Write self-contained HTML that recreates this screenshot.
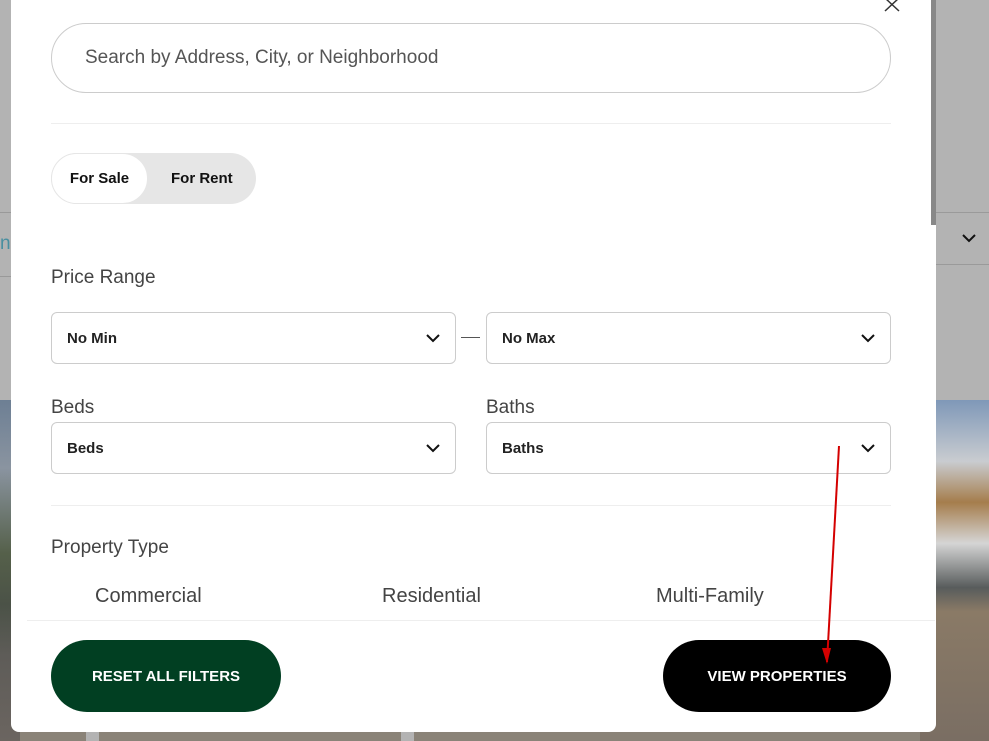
<!DOCTYPE html>
<html><head><meta charset="utf-8"><style>
*{box-sizing:border-box;margin:0;padding:0}
body{width:989px;height:741px;overflow:hidden;position:relative;background:#b3b3b3;font-family:"Liberation Sans",sans-serif}
.img{position:absolute;top:400px;height:341px;background:linear-gradient(180deg,#6d7f94 0%,#8a94a0 20%,#55604a 45%,#4b5247 60%,#5e5c58 75%,#6b6560 100%)}
.sel{position:absolute;left:920px;top:212px;width:80px;height:53px;border:1px solid #9a9a9a;border-radius:8px}
.modal{position:absolute;left:11px;top:-10px;width:925px;height:742px;background:#fff;border-radius:8px}
.abs{position:absolute}
.search{left:51px;top:23px;width:840px;height:70px;border:1px solid #ccc;border-radius:35px;font-size:19px;color:#555;padding:0 0 0 33px;line-height:68px}
.hr{height:1px;background:#eee;left:51px;width:840px}
.tog{left:51px;top:153px;width:205px;height:51px;background:#e6e6e6;border-radius:26px}
.tog .a{position:absolute;left:0;top:0;width:97px;height:51px;background:#fff;border:1px solid #e6e6e6;border-radius:26px;text-align:center;line-height:49px;font-weight:bold;font-size:15px;color:#111}
.tog .b{position:absolute;left:120px;top:0;line-height:51px;font-weight:bold;font-size:15px;color:#111}
.lbl{font-size:19px;color:#444}
.dd{height:52px;border:1px solid #ccc;border-radius:6px;font-weight:bold;font-size:15px;color:#222;padding-left:15px;line-height:51px}
.dd svg{position:absolute;right:14px;top:20px}
.pt{font-size:20px;color:#444;top:585px}
.btn{top:640px;height:72px;border-radius:36px;color:#fff;font-weight:bold;font-size:15px;text-align:center;line-height:73px}
</style></head><body>
<div class="img" style="left:0;width:20px"></div>
<div class="img" style="left:920px;width:69px;background:linear-gradient(180deg,#7f98b8 0%,#c9ccd0 18%,#a57d4c 30%,#d5d5d5 42%,#585c5c 55%,#8a7a66 62%,#7a6e63 100%)"></div>
<div class="abs" style="left:20px;top:732px;width:900px;height:9px;background:#8a8378"></div>
<div class="abs" style="left:86px;top:732px;width:13px;height:9px;background:#b3b3b3"></div>
<div class="abs" style="left:401px;top:732px;width:13px;height:9px;background:#b3b3b3"></div>
<div class="sel"><svg width="16" height="10" style="position:absolute;left:40px;top:20px" viewBox="0 0 16 10"><path d="M2 2l6 6 6-6" fill="none" stroke="#111" stroke-width="2"/></svg></div>
<div class="abs" style="left:0;top:233px;font-size:19px;color:#4a8fa0">n</div>
<div class="abs" style="left:0;top:212px;width:11px;height:1px;background:#999"></div>
<div class="abs" style="left:0;top:276px;width:11px;height:1px;background:#999"></div>
<div class="modal"></div>
<div class="abs" style="left:931px;top:0;width:5px;height:225px;background:#888"></div>
<svg class="abs" style="left:883px;top:0" width="20" height="12" viewBox="0 0 20 12"><path d="M2 -2l14 13M16 -2L2 11" stroke="#333" stroke-width="1.5"/></svg>
<div class="abs search">Search by Address, City, or Neighborhood</div>
<div class="abs hr" style="top:123px"></div>
<div class="abs tog"><div class="a">For Sale</div><div class="b">For Rent</div></div>
<div class="abs lbl" style="left:51px;top:267px">Price Range</div>
<div class="abs dd" style="left:51px;top:312px;width:405px">No Min<svg width="16" height="10" viewBox="0 0 16 10"><path d="M2 2l6 6 6-6" fill="none" stroke="#111" stroke-width="2"/></svg></div>
<div class="abs" style="left:461px;top:337px;width:19px;height:1px;background:#555"></div>
<div class="abs dd" style="left:486px;top:312px;width:405px">No Max<svg width="16" height="10" viewBox="0 0 16 10"><path d="M2 2l6 6 6-6" fill="none" stroke="#111" stroke-width="2"/></svg></div>
<div class="abs lbl" style="left:51px;top:397px">Beds</div>
<div class="abs lbl" style="left:486px;top:397px">Baths</div>
<div class="abs dd" style="left:51px;top:422px;width:405px">Beds<svg width="16" height="10" viewBox="0 0 16 10"><path d="M2 2l6 6 6-6" fill="none" stroke="#111" stroke-width="2"/></svg></div>
<div class="abs dd" style="left:486px;top:422px;width:405px">Baths<svg width="16" height="10" viewBox="0 0 16 10"><path d="M2 2l6 6 6-6" fill="none" stroke="#111" stroke-width="2"/></svg></div>
<div class="abs hr" style="top:505px"></div>
<div class="abs lbl" style="left:51px;top:537px">Property Type</div>
<div class="abs pt" style="left:95px">Commercial</div>
<div class="abs pt" style="left:382px">Residential</div>
<div class="abs pt" style="left:656px">Multi-Family</div>
<div class="abs hr" style="top:620px;left:27px;width:908px"></div>
<div class="abs btn" style="left:51px;width:230px;background:#013f22">RESET ALL FILTERS</div>
<div class="abs btn" style="left:663px;width:228px;background:#000">VIEW PROPERTIES</div>
<svg class="abs" style="left:815px;top:440px" width="30" height="230" viewBox="0 0 30 230"><path d="M24 6L12 222" stroke="#d40000" stroke-width="2"/><path d="M7 208l5 16 4-16z" fill="#d40000"/></svg>
</body></html>
